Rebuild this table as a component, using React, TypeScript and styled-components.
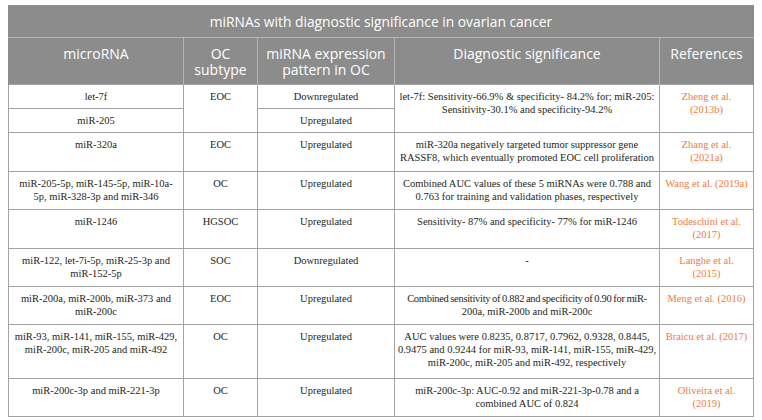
import React from "react";
import styled, { createGlobalStyle } from "styled-components";

const Global = createGlobalStyle`
  html, body { margin: 0; padding: 0; background: #ffffff; }
  body { width: 762px; height: 420px; overflow: hidden; }
`;

const Page = styled.div`
  padding: 5px 9px 0 8px;
`;

const Table = styled.table`
  width: 745px;
  border-collapse: collapse;
  table-layout: fixed;
  font-family: "Liberation Serif", "Times New Roman", serif;
  font-size: 10.5px;
  color: #231f20;
`;

const TitleCell = styled.th`
  background: #8c8c8c;
  color: #ffffff;
  font-family: "Open Sans", "Noto Sans", sans-serif;
  font-weight: 400;
  font-size: 13.8px;
  height: 31px;
  padding: 0;
  text-align: center;
  vertical-align: middle;
  border: 1px solid #8c8c8c;
  border-bottom: 1px solid #b4b4b4;
`;

const HeadCell = styled.th`
  background: #8c8c8c;
  color: #ffffff;
  font-family: "Open Sans", "Noto Sans", sans-serif;
  font-weight: 400;
  font-size: 14px;
  line-height: 16px;
  height: 47px;
  padding: 8px 2px 0;
  text-align: center;
  vertical-align: top;
  white-space: nowrap;
  border-left: 1px solid #b4b4b4;
  border-right: 1px solid #b4b4b4;
  box-sizing: border-box;
  &:first-child { border-left-color: #8c8c8c; }
  &:last-child { border-right-color: #8c8c8c; }
`;

const Row = styled.tr<{ $h: number }>`
  height: ${(p) => p.$h}px;
`;

const Cell = styled.td<{ $ref?: boolean }>`
  border: 1px solid #a3a3a3;
  padding: 5px 1px 0;
  text-align: center;
  vertical-align: top;
  line-height: 13px;
  white-space: nowrap;
  color: ${(p) => (p.$ref ? "#f07a3c" : "#231f20")};
`;

const Line = styled.div<{ $tight?: boolean }>`
  letter-spacing: ${(p) => (p.$tight ? "-0.3px" : "normal")};
  word-spacing: ${(p) => (p.$tight ? "-0.5px" : "normal")};
`;

type L = string | { t: string; tight: boolean };

type R = {
  h: number;
  mirna: L[];
  subtype?: string;
  subSpan?: number;
  pattern: string;
  diag?: L[];
  diagSpan?: number;
  ref?: L[];
  refSpan?: number;
};

const rows: R[] = [
  {
    h: 24,
    mirna: ["let-7f"],
    subtype: "EOC",
    subSpan: 2,
    pattern: "Downregulated",
    diag: ["let-7f: Sensitivity-66.9% & specificity- 84.2% for; miR-205:", "Sensitivity-30.1% and specificity-94.2%"],
    diagSpan: 2,
    ref: ["Zheng et al.", "(2013b)"],
    refSpan: 2,
  },
  { h: 24, mirna: ["miR-205"], pattern: "Upregulated" },
  {
    h: 39,
    mirna: ["miR-320a"],
    subtype: "EOC",
    pattern: "Upregulated",
    diag: ["miR-320a negatively targeted tumor suppressor gene", "RASSF8, which eventually promoted EOC cell proliferation"],
    ref: ["Zhang et al.", "(2021a)"],
  },
  {
    h: 38,
    mirna: ["miR-205-5p, miR-145-5p, miR-10a-", "5p, miR-328-3p and miR-346"],
    subtype: "OC",
    pattern: "Upregulated",
    diag: ["Combined AUC values of these 5 miRNAs were 0.788 and", "0.763 for training and validation phases, respectively"],
    ref: ["Wang et al. (2019a)"],
  },
  {
    h: 39,
    mirna: ["miR-1246"],
    subtype: "HGSOC",
    pattern: "Upregulated",
    diag: ["Sensitivity- 87% and specificity- 77% for miR-1246"],
    ref: ["Todeschini et al.", "(2017)"],
  },
  {
    h: 38,
    mirna: ["miR-122, let-7i-5p, miR-25-3p and", "miR-152-5p"],
    subtype: "SOC",
    pattern: "Downregulated",
    diag: ["-"],
    ref: ["Langhe et al.", "(2015)"],
  },
  {
    h: 38,
    mirna: ["miR-200a, miR-200b, miR-373 and", "miR-200c"],
    subtype: "EOC",
    pattern: "Upregulated",
    diag: [{ t: "Combined sensitivity of 0.882 and specificity of 0.90 for miR-", tight: true }, "200a, miR-200b and miR-200c"],
    ref: ["Meng et al. (2016)"],
  },
  {
    h: 54,
    mirna: ["miR-93, miR-141, miR-155, miR-429,", "miR-200c, miR-205 and miR-492"],
    subtype: "OC",
    pattern: "Upregulated",
    diag: [
      "AUC values were 0.8235, 0.8717, 0.7962, 0.9328, 0.8445,",
      "0.9475 and 0.9244 for miR-93, miR-141, miR-155, miR-429,",
      "miR-200c, miR-205 and miR-492, respectively",
    ],
    ref: ["Braicu et al. (2017)"],
  },
  {
    h: 38,
    mirna: ["miR-200c-3p and miR-221-3p"],
    subtype: "OC",
    pattern: "Upregulated",
    diag: ["miR-200c-3p: AUC-0.92 and miR-221-3p-0.78 and a", "combined AUC of 0.824"],
    ref: ["Oliveira et al.", "(2019)"],
  },
];

function Lines({ items }: { items: L[] }) {
  return (
    <>
      {items.map((l, i) =>
        typeof l === "string" ? (
          <Line key={i}>{l}</Line>
        ) : (
          <Line key={i} $tight={l.tight}>
            {l.t}
          </Line>
        )
      )}
    </>
  );
}

export default function App() {
  return (
    <>
      <Global />
      <Page>
        <Table>
          <colgroup>
            <col style={{ width: 175 }} />
            <col style={{ width: 74 }} />
            <col style={{ width: 137 }} />
            <col style={{ width: 265 }} />
            <col style={{ width: 94 }} />
          </colgroup>
          <thead>
            <tr>
              <TitleCell colSpan={5}>miRNAs with diagnostic significance in ovarian cancer</TitleCell>
            </tr>
            <tr>
              <HeadCell>microRNA</HeadCell>
              <HeadCell>
                OC
                <br />
                subtype
              </HeadCell>
              <HeadCell>
                miRNA expression
                <br />
                pattern in OC
              </HeadCell>
              <HeadCell>Diagnostic significance</HeadCell>
              <HeadCell>References</HeadCell>
            </tr>
          </thead>
          <tbody>
            {rows.map((r, i) => (
              <Row key={i} $h={r.h}>
                <Cell>
                  <Lines items={r.mirna} />
                </Cell>
                {r.subtype !== undefined && <Cell rowSpan={r.subSpan ?? 1}>{r.subtype}</Cell>}
                <Cell>{r.pattern}</Cell>
                {r.diag !== undefined && (
                  <Cell rowSpan={r.diagSpan ?? 1}>
                    <Lines items={r.diag} />
                  </Cell>
                )}
                {r.ref !== undefined && (
                  <Cell $ref rowSpan={r.refSpan ?? 1}>
                    <Lines items={r.ref} />
                  </Cell>
                )}
              </Row>
            ))}
          </tbody>
        </Table>
      </Page>
    </>
  );
}
